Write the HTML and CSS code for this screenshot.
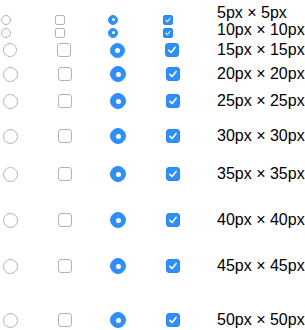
FILE: index.html
```html
<!DOCTYPE html>
<html>
<head>
<meta charset="utf-8">
<link rel="stylesheet" href="styles.css">
</head>
<body>
<div class="list">
  <div class="row h5"><div class="line">
    <span class="radio sm first"></span>
    <span class="box sm"></span>
    <span class="radio on sm"><i class="dot"></i></span>
    <span class="box on sm"><svg viewBox="0 0 14 14"><path d="M3.3 7.4 L5.9 10 L10.6 4"/></svg></span>
    <span class="label up6">5px × 5px</span>
  </div></div>
  <div class="row h10"><div class="line">
    <span class="radio sm first"></span>
    <span class="box sm"></span>
    <span class="radio on sm"><i class="dot"></i></span>
    <span class="box on sm"><svg viewBox="0 0 14 14"><path d="M3.3 7.4 L5.9 10 L10.6 4"/></svg></span>
    <span class="label up2">10px × 10px</span>
  </div></div>
  <div class="row h15"><div class="line">
    <span class="radio md first"></span>
    <span class="box md"></span>
    <span class="radio on md"><i class="dot"></i></span>
    <span class="box on md"><svg viewBox="0 0 14 14"><path d="M3.3 7.4 L5.9 10 L10.6 4"/></svg></span>
    <span class="label">15px × 15px</span>
  </div></div>
  <div class="row h20"><div class="line">
    <span class="radio lg first"></span>
    <span class="box lg"></span>
    <span class="radio on lg"><i class="dot"></i></span>
    <span class="box on lg"><svg viewBox="0 0 14 14"><path d="M3.3 7.4 L5.9 10 L10.6 4"/></svg></span>
    <span class="label">20px × 20px</span>
  </div></div>
  <div class="row h25"><div class="line">
    <span class="radio lg first"></span>
    <span class="box lg"></span>
    <span class="radio on lg"><i class="dot"></i></span>
    <span class="box on lg"><svg viewBox="0 0 14 14"><path d="M3.3 7.4 L5.9 10 L10.6 4"/></svg></span>
    <span class="label">25px × 25px</span>
  </div></div>
  <div class="row h30"><div class="line">
    <span class="radio lg first"></span>
    <span class="box lg"></span>
    <span class="radio on lg"><i class="dot"></i></span>
    <span class="box on lg"><svg viewBox="0 0 14 14"><path d="M3.3 7.4 L5.9 10 L10.6 4"/></svg></span>
    <span class="label">30px × 30px</span>
  </div></div>
  <div class="row h35"><div class="line">
    <span class="radio lg first"></span>
    <span class="box lg"></span>
    <span class="radio on lg"><i class="dot"></i></span>
    <span class="box on lg"><svg viewBox="0 0 14 14"><path d="M3.3 7.4 L5.9 10 L10.6 4"/></svg></span>
    <span class="label">35px × 35px</span>
  </div></div>
  <div class="row h40"><div class="line">
    <span class="radio lg first"></span>
    <span class="box lg"></span>
    <span class="radio on lg"><i class="dot"></i></span>
    <span class="box on lg"><svg viewBox="0 0 14 14"><path d="M3.3 7.4 L5.9 10 L10.6 4"/></svg></span>
    <span class="label">40px × 40px</span>
  </div></div>
  <div class="row h45"><div class="line">
    <span class="radio lg first"></span>
    <span class="box lg"></span>
    <span class="radio on lg"><i class="dot"></i></span>
    <span class="box on lg"><svg viewBox="0 0 14 14"><path d="M3.3 7.4 L5.9 10 L10.6 4"/></svg></span>
    <span class="label">45px × 45px</span>
  </div></div>
  <div class="row h50"><div class="line">
    <span class="radio lg first"></span>
    <span class="box lg"></span>
    <span class="radio on lg"><i class="dot"></i></span>
    <span class="box on lg"><svg viewBox="0 0 14 14"><path d="M3.3 7.4 L5.9 10 L10.6 4"/></svg></span>
    <span class="label">50px × 50px</span>
  </div></div>
</div>
</body>
</html>
```
FILE: styles.css
```css
html, body {
  margin: 0;
  padding: 0;
  background: #fff;
  overflow: hidden;
}
body {
  font-family: "Liberation Sans", Arial, Helvetica, sans-serif;
  font-size: 16px;
  color: #000;
}
.list {
  padding-top: 4px;
  display: flex;
  flex-direction: column;
}
.row { flex: none; }
.h5 { height: 17px; }
.h10 { height: 19px; }
.h15 { height: 24px; }
.h20 { height: 27px; }
.h25 { height: 35px; }
.h30 { height: 38px; }
.h35 { height: 46px; }
.h40 { height: 46px; }
.h45 { height: 54px; }
.h50 { height: 30px; }

.line {
  height: 20px;
  display: grid;
  grid-template-columns: 52px 53px 55px 57px 1fr;
  align-items: center;
}
.radio, .box {
  box-sizing: border-box;
  display: flex;
  align-items: center;
  justify-content: center;
  background: #fff;
  border: 1px solid #b3b3b3;
}
.radio { border-radius: 50%; }
.sm { width: 10px; height: 10px; margin-left: 3px; }
.md { width: 14px; height: 14px; margin-left: 5px; }
.lg { width: 15px; height: 15px; margin-left: 5px; }
.sm.first { margin-left: 1px; }
.md.first, .lg.first { margin-left: 3px; }
.box.sm { border-radius: 2px; }
.box.md, .box.lg { border-radius: 3px; width: 14px; height: 14px; }
.box.lg { margin-left: 6px; }
.radio.on {
  background: #2f8ff9;
  border-color: #2f8ff9;
}
.radio.on.lg { width: 16px; height: 16px; }
.radio.on.md { width: 15px; height: 15px; }
.dot {
  display: block;
  background: #fff;
  border-radius: 50%;
}
.sm .dot { width: 3px; height: 3px; }
.md .dot { width: 5px; height: 5px; }
.lg .dot { width: 5px; height: 5px; }
.box.on {
  background: #2f8ff9;
  border-color: #2a88f5;
}
.box svg {
  width: 100%;
  height: 100%;
  fill: none;
  stroke: #fff;
  stroke-width: 1.8;
  stroke-linecap: round;
  stroke-linejoin: round;
}
.label {
  line-height: 18px;
  white-space: nowrap;
}
.up6 { margin-bottom: 13px; }
.up2 { margin-bottom: 5px; }
```
